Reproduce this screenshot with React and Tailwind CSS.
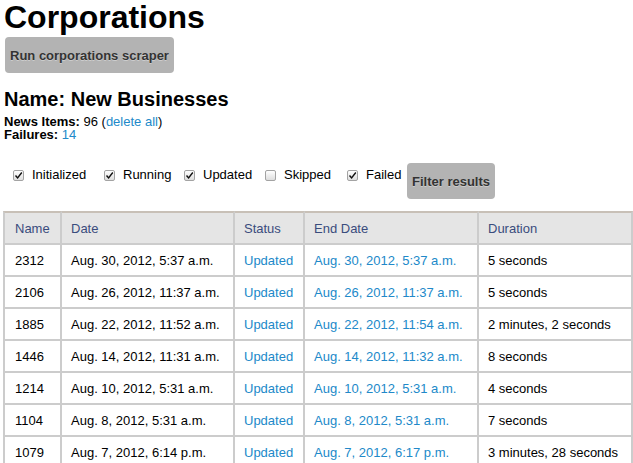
const FILTERS = [
  { label: 'Initialized', checked: true, w: 'w-[91px]' },
  { label: 'Running', checked: true, w: 'w-[80px]' },
  { label: 'Updated', checked: true, w: 'w-[81px]' },
  { label: 'Skipped', checked: false, w: 'w-[82px]' },
  { label: 'Failed', checked: true, w: 'w-[60px]' },
];

const ROWS = [
  ['2312', 'Aug. 30, 2012, 5:37 a.m.', 'Aug. 30, 2012, 5:37 a.m.', '5 seconds'],
  ['2106', 'Aug. 26, 2012, 11:37 a.m.', 'Aug. 26, 2012, 11:37 a.m.', '5 seconds'],
  ['1885', 'Aug. 22, 2012, 11:52 a.m.', 'Aug. 22, 2012, 11:54 a.m.', '2 minutes, 2 seconds'],
  ['1446', 'Aug. 14, 2012, 11:31 a.m.', 'Aug. 14, 2012, 11:32 a.m.', '8 seconds'],
  ['1214', 'Aug. 10, 2012, 5:31 a.m.', 'Aug. 10, 2012, 5:31 a.m.', '4 seconds'],
  ['1104', 'Aug. 8, 2012, 5:31 a.m.', 'Aug. 8, 2012, 5:31 a.m.', '7 seconds'],
  ['1079', 'Aug. 7, 2012, 6:14 p.m.', 'Aug. 7, 2012, 6:17 p.m.', '3 minutes, 28 seconds'],
];

function Checkbox({ checked }) {
  return (
    <span className="mt-[2px] w-[11px] h-[11px] shrink-0 rounded-[2px] border border-[#a3a3a3] bg-linear-to-b from-white to-[#dedede] flex items-center justify-center">
      {checked && (
        <svg width="9" height="9" viewBox="0 0 9 9">
          <path d="M1.5 4.5 L3.6 7 L7.8 1.5" fill="none" stroke="#111" strokeWidth="1.4" />
        </svg>
      )}
    </span>
  );
}

function GrayButton({ children, className = '' }) {
  return (
    <button className={`h-[36px] px-[5px] rounded-[4px] bg-[#b3b3b3] text-[13px] leading-[13px] font-bold text-[#333] whitespace-nowrap [text-shadow:0_1px_0_rgba(255,255,255,0.35)] ${className}`}>
      {children}
    </button>
  );
}

export default function App() {
  const cell = 'pl-[9px] h-[32px] border-r-2 border-b-2 border-[#cccccc] whitespace-nowrap';
  return (
    <div className="min-h-screen bg-white text-black overflow-hidden text-[13px] leading-[13px]" style={{ fontFamily: '"Liberation Sans", Arial, sans-serif' }}>
      <h1 className="pl-[4px] text-[32px] leading-[34px] font-bold">Corporations</h1>
      <GrayButton className="mt-[3px] ml-[5px]">Run corporations scraper</GrayButton>

      <h2 className="mt-[14px] pl-[4px] text-[20px] leading-[24px] font-bold">Name: New Businesses</h2>
      <div className="mt-[4px] pl-[4px]">
        <div><b>News Items:</b> 96 (<a className="text-[#2189c9]">delete all</a>)</div>
        <div><b>Failures:</b> <a className="text-[#2189c9]">14</a></div>
      </div>

      <div className="mt-[22px] pl-[13px] flex items-start">
        {FILTERS.map((f) => (
          <label key={f.label} className={`${f.w} mt-[5px] flex items-start gap-[8px]`}>
            <Checkbox checked={f.checked} />
            <span>{f.label}</span>
          </label>
        ))}
        <GrayButton>Filter results</GrayButton>
      </div>

      <table className="mt-[12px] ml-[3px] w-[630px] table-fixed border-separate border-spacing-0">
        <colgroup>
          <col className="w-[59px]" />
          <col className="w-[173px]" />
          <col className="w-[70px]" />
          <col className="w-[174px]" />
          <col className="w-[154px]" />
        </colgroup>
        <thead>
          <tr className="bg-[#e5e5e5] text-[#3a4c7d] text-left">
            <th className={`${cell} h-[34px] font-normal border-t-2 border-t-[#c8c0b7] border-l-2 pl-[10px]`}>Name</th>
            <th className={`${cell} h-[34px] font-normal border-t-2 border-t-[#c8c0b7]`}>Date</th>
            <th className={`${cell} h-[34px] font-normal border-t-2 border-t-[#c8c0b7]`}>Status</th>
            <th className={`${cell} h-[34px] font-normal border-t-2 border-t-[#c8c0b7]`}>End Date</th>
            <th className={`${cell} h-[34px] font-normal border-t-2 border-t-[#c8c0b7]`}>Duration</th>
          </tr>
        </thead>
        <tbody>
          {ROWS.map(([id, date, end, dur]) => (
            <tr key={id}>
              <td className={`${cell} border-l-2 pl-[10px]`}>{id}</td>
              <td className={cell}>{date}</td>
              <td className={`${cell} text-[#2189c9]`}>Updated</td>
              <td className={`${cell} text-[#2189c9]`}>{end}</td>
              <td className={cell}>{dur}</td>
            </tr>
          ))}
        </tbody>
      </table>
    </div>
  );
}
